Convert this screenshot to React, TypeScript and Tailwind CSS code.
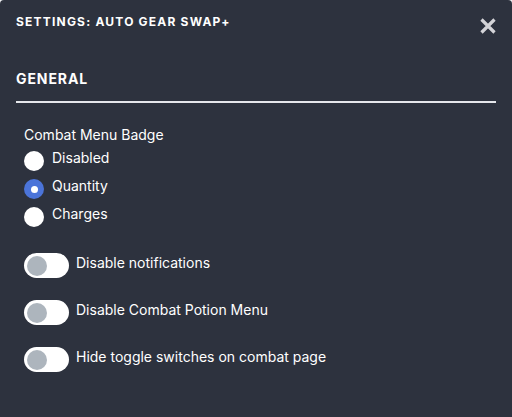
import React from "react";

function Radio({ checked, label }: { checked?: boolean; label: string }) {
  return (
    <div className="flex items-start h-[28px]">
      <div
        className={
          checked
            ? "w-[20px] h-[20px] rounded-full bg-[#4b74d9] flex items-center justify-center mt-[3px]"
            : "w-[20px] h-[20px] rounded-full bg-white mt-[3px]"
        }
      >
        {checked && <div className="w-[7px] h-[7px] rounded-full bg-white" />}
      </div>
      <span className="ml-[8px] text-[14px] leading-[20px] text-white">{label}</span>
    </div>
  );
}

function Toggle({ label }: { label: string }) {
  return (
    <div className="flex items-start h-[47px]">
      <div className="w-[45px] h-[25px] rounded-full bg-white flex items-center pl-[3px]">
        <div className="w-[20px] h-[20px] rounded-full bg-[#adb5bd]" />
      </div>
      <span className="ml-[7px] text-[14px] leading-[20px] text-white">{label}</span>
    </div>
  );
}

export default function App() {
  return (
    <div
      className="w-[512px] h-[417px] bg-[#f3f4f6]"
      style={{ fontFamily: "Inter, 'Noto Sans', sans-serif" }}
    >
      <div className="w-[512px] h-[417px] bg-[#2d323e] rounded-t-[4px] overflow-hidden">
        <div className="flex items-start justify-between pl-4 pr-[15px] pt-[13px] h-[56px]">
          <h2 className="text-[12px] leading-[18px] font-bold tracking-[1.2px] text-white uppercase">
            Settings: Auto Gear Swap+
          </h2>
          <svg width="18" height="18" viewBox="0 0 18 18" className="mt-[4px]">
            <path d="M2.5 2.5 L15.5 15.5 M15.5 2.5 L2.5 15.5" stroke="#d4d4d8" strokeWidth="3.2" strokeLinecap="butt" />
          </svg>
        </div>
        <div className="px-4">
          <h3 className="text-[14px] leading-[20px] font-bold tracking-[0.9px] text-white mt-[13px]">GENERAL</h3>
          <div className="h-[2px] bg-[#e5e7eb] mt-[12px]" />
        </div>
        <div className="px-6 pt-[22px]">
          <div className="text-[14px] leading-[20px] text-white">Combat Menu Badge</div>
          <div className="mt-[3px]">
            <Radio label="Disabled" />
            <Radio checked label="Quantity" />
            <Radio label="Charges" />
          </div>
          <div className="mt-[21px]">
            <Toggle label="Disable notifications" />
            <Toggle label="Disable Combat Potion Menu" />
            <Toggle label="Hide toggle switches on combat page" />
          </div>
        </div>
      </div>
    </div>
  );
}
